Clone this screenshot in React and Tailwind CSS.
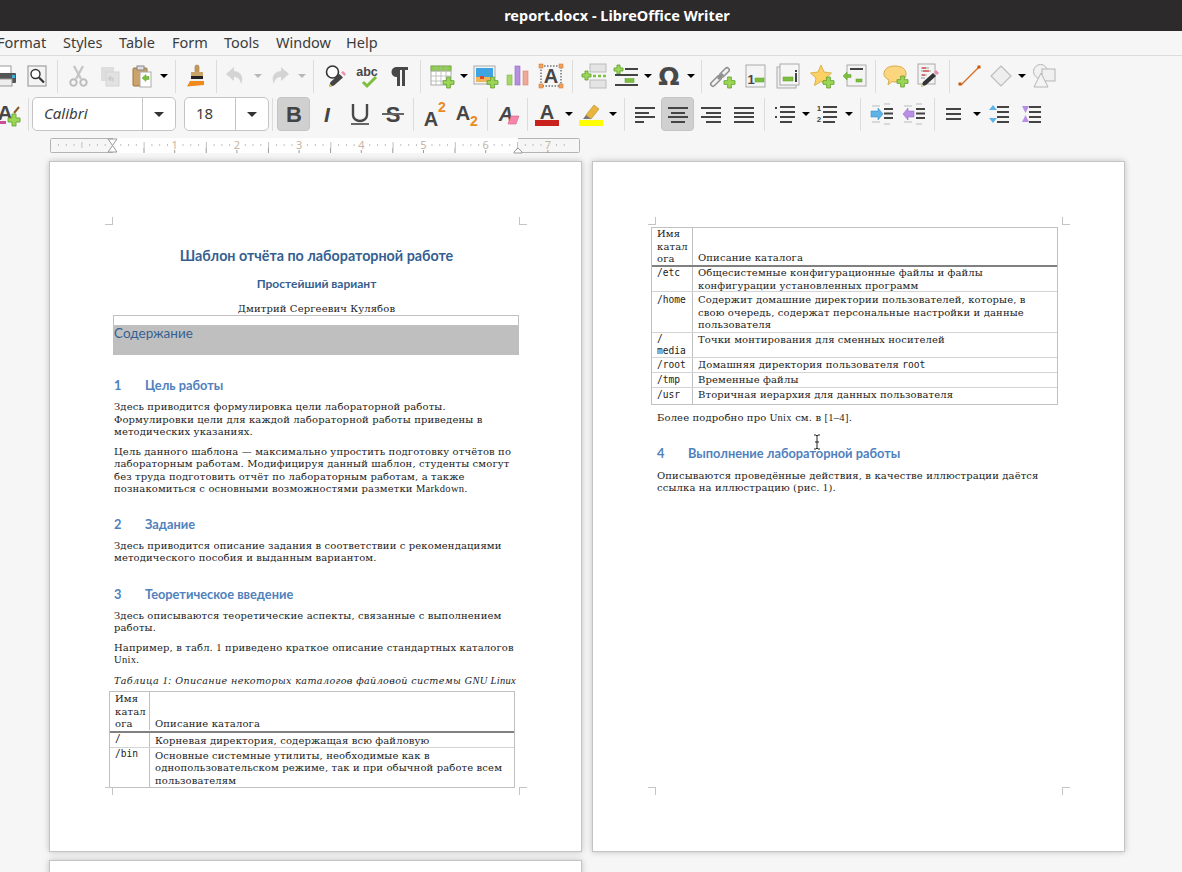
import React from 'react';

const G = '#7dbf3f';
const Plus = ({ x = 14, y = 14, s = 10 }) => {
  const a = s * 0.33;
  const b = s * 0.34;
  return (
    <path d={`M${x + a} ${y}h${b}v${a}h${a}v${b}h-${a}v${a}h-${b}v-${a}h-${a}v-${b}h${a}z`} fill="#9bd655" stroke="#5e9e2a" strokeWidth="0.8" />
  );
};
const Svg = ({ children, s = 24 }) => (
  <svg width={s} height={s} viewBox="0 0 24 24" className="block overflow-visible">{children}</svg>
);
const Letter = ({ t = 'A', x = 12, y = 19, size = 21, fill = '#464646', extra = {} }) => (
  <text x={x} y={y} fontSize={size} fontWeight="700" fontFamily="'Liberation Sans', sans-serif" textAnchor="middle" fill={fill} {...extra}>{t}</text>
);
const Lines = ({ rows, c = '#444', h = 2 }) => rows.map((r, i) => <rect key={i} x={r[0]} y={r[2]} width={r[1]} height={h} fill={c} />);

const Print = () => (
  <Svg>
    <rect x="6" y="2" width="12" height="8" fill="#fff" stroke="#999" />
    <rect x="1" y="9" width="22" height="10" rx="1" fill="#555" />
    <rect x="19" y="11" width="3" height="3" fill="#3bb3e0" />
    <rect x="5" y="15" width="14" height="7" fill="#eee" stroke="#999" />
  </Svg>
);
const Preview = () => (
  <Svg>
    <rect x="3" y="2" width="18" height="20" fill="#f4f4f4" stroke="#a0a0a0" strokeWidth="1.2" />
    <circle cx="10.5" cy="10" r="4.5" fill="#fff" stroke="#333" strokeWidth="1.4" />
    <path d="M14 13.5l5 5" stroke="#333" strokeWidth="2.2" />
  </Svg>
);
const Cut = () => (
  <Svg>
    <path d="M8 2l7 13M17 2l-7 13" stroke="#c6c6c6" strokeWidth="2.4" />
    <circle cx="7.5" cy="18.5" r="3.2" fill="none" stroke="#bdbdbd" strokeWidth="2" />
    <circle cx="17.5" cy="18.5" r="3.2" fill="none" stroke="#bdbdbd" strokeWidth="2" />
  </Svg>
);
const Copy = () => (
  <Svg>
    <rect x="3" y="3" width="13" height="14" fill="#dedede" />
    <rect x="8" y="8" width="13" height="14" fill="#e2e2e2" stroke="#d4d4d4" />
    <path d="M13 12l-2.500 2.500 2.500 2.500M11 14.500h4v3" fill="none" stroke="#c9c9c9" strokeWidth="1.3" />
  </Svg>
);
const Paste = () => (
  <Svg>
    <rect x="3" y="4" width="14" height="18" rx="1" fill="#cda36b" stroke="#9a7840" />
    <rect x="7" y="2" width="7" height="4" fill="#ddd" stroke="#888" />
    <rect x="10" y="8" width="11" height="15" fill="#fff" stroke="#aaa" />
    <path d="M12 14l4-3.500v2h3v3h-3v2z" fill={G} stroke="#5e9e2a" strokeWidth="0.5" />
  </Svg>
);
const Brush = () => (
  <Svg>
    <rect x="10" y="1" width="4" height="8" rx="2" fill="#c49a5a" stroke="#9a7840" strokeWidth="0.6" />
    <rect x="6" y="8" width="12" height="4" fill="#c9a468" />
    <rect x="6" y="12" width="12" height="4" fill="#222" />
    <rect x="6" y="15" width="12" height="2" fill="#eee" />
    <path d="M5 17h14v4l-17 1.500z" fill="#f08a1d" />
  </Svg>
);
const Undo = ({ flip }) => (
  <Svg>
    <path d={flip ? 'M14 3l8 7-8 7v-4c-4 0-6 2-7 7-3-6-1-12 7-13z' : 'M10 3l-8 7 8 7v-4c4 0 6 2 7 7 3-6 1-12-7-13z'} fill="#d4d4d4" />
  </Svg>
);
const Find = () => (
  <Svg>
    <circle cx="9.500" cy="8" r="6" fill="#fff" stroke="#333" strokeWidth="1.600" />
    <path d="M14 12l2 2" stroke="#333" strokeWidth="2" />
    <path d="M6 23l1.500-5 9-8 3.500 3.500-9 8z" fill="#444" />
    <path d="M18 8.500l2-1.500 3 3-1.500 2z" fill="#f08cb4" />
    <path d="M6 23l1-3 2 2z" fill="#f5d76e" />
  </Svg>
);
const Abc = () => (
  <Svg>
    <Letter t="abc" x={12} y={12} size={12.5} />
    <path d="M8 18l4 4 9-9" fill="none" stroke={G} strokeWidth="3" />
  </Svg>
);
const Pilcrow = () => (
  <Svg>
    <path d="M9 3h12v3h-3v16h-3V6h-2v16h-3v-9a5 5 0 0 1 -1-10z" fill="#484848" />
  </Svg>
);
const TableIcon = () => (
  <Svg>
    <rect x="1" y="2" width="20" height="19" fill="#fff" stroke="#aaa" />
    <rect x="1" y="2" width="20" height="5" fill="#8fcb4f" stroke="#6aa52e" strokeWidth="0.600" />
    <path d="M6 2v19M11 2v19M16 2v19M1 7h20M1 12h20M1 17h20" stroke="#b5b5b5" strokeWidth="0.800" />
    <Plus x={13} y={13} s={11} />
  </Svg>
);
const ImageIcon = () => (
  <Svg>
    <rect x="0" y="2" width="21" height="18" fill="#f4f4f4" stroke="#a8a8a8" />
    <rect x="2" y="4" width="17" height="14" fill="#3ea5e2" />
    <path d="M2 13h17v5H2z" fill="#f2b55c" />
    <rect x="6" y="12" width="4" height="3" fill="#d94a2a" />
    <Plus x={13} y={13} s={11} />
  </Svg>
);
const Chart = () => (
  <Svg>
    <rect x="1" y="11" width="5" height="10" fill="#a5d86a" stroke="#7fb348" strokeWidth="0.600" />
    <rect x="9" y="2" width="5" height="19" fill="#b68fe0" stroke="#9068c0" strokeWidth="0.600" />
    <rect x="17" y="7" width="5" height="14" fill="#f0a996" stroke="#d08670" strokeWidth="0.600" />
  </Svg>
);
const TextBox = () => (
  <Svg>
    <rect x="2" y="2" width="20" height="20" fill="none" stroke="#333" strokeDasharray="1.500 1.500" />
    <Letter x={12} y={19} size={20} />
    <g fill="#f2a15f" stroke="#c9722a" strokeWidth="0.500">
      <rect x="0" y="0" width="4" height="4" /><rect x="20" y="0" width="4" height="4" />
      <rect x="0" y="20" width="4" height="4" /><rect x="20" y="20" width="4" height="4" />
    </g>
  </Svg>
);
const PageBreak = () => (
  <Svg>
    <rect x="8" y="0" width="16" height="8" fill="#e4e4e4" stroke="#bbb" />
    <rect x="8" y="16" width="16" height="8" fill="#e4e4e4" stroke="#bbb" />
    <Plus x={0} y={7} s={9} />
    <path d="M11 12h3M16 12h3M21 12h3" stroke={G} strokeWidth="2.400" />
  </Svg>
);
const Field = () => (
  <Svg>
    <Plus x={0} y={1} s={9} />
    <path d="M11 5h13M1 11h23M1 21h23" stroke="#444" strokeWidth="2" />
    <rect x="11" y="14.500" width="9" height="4" fill={G} stroke="#5e9e2a" strokeWidth="0.500" />
  </Svg>
);
const Omega = () => (
  <Svg>
    <text x="12" y="21" fontSize="25" fontWeight="700" fontFamily="'DejaVu Sans', sans-serif" textAnchor="middle" fill="#484848">Ω</text>
  </Svg>
);
const LinkIcon = () => (
  <Svg>
    <path d="M2 20l6-6M11 11l5-5" stroke="#8f8f8f" strokeWidth="6" strokeLinecap="round" />
    <path d="M2 20l6-6M11 11l5-5" stroke="#f2f2f2" strokeWidth="3" strokeLinecap="round" />
    <path d="M7 15l5-5" stroke="#8f8f8f" strokeWidth="3" />
    <Plus x={13} y={13} s={11} />
  </Svg>
);
const Footnote = () => (
  <Svg>
    <rect x="2" y="1" width="19" height="22" fill="#f4f4f4" stroke="#aaa" />
    <Letter t="1" x={7} y={20} size={13} />
    <rect x="11" y="14" width="9" height="4" fill={G} stroke="#5e9e2a" strokeWidth="0.500" />
  </Svg>
);
const Endnote = () => (
  <Svg>
    <rect x="1" y="3" width="19" height="21" fill="#eee" stroke="#aaa" />
    <rect x="4" y="0" width="19" height="21" fill="#f6f6f6" stroke="#aaa" />
    <rect x="19" y="6" width="2" height="2" fill="#444" />
    <rect x="19" y="9" width="2" height="9" fill="#444" />
    <rect x="7" y="13" width="10" height="4" fill={G} stroke="#5e9e2a" strokeWidth="0.500" />
  </Svg>
);
const Star = () => (
  <Svg>
    <path d="M11 1l3 7 7.500 1-5.500 5 1.500 7.500-6.500-4-6.500 4 1.500-7.500-5.500-5 7.500-1z" fill="#fbd064" stroke="#d6a53a" strokeWidth="0.800" />
    <Plus x={13} y={13} s={11} />
  </Svg>
);
const CrossRef = () => (
  <Svg>
    <rect x="4" y="1" width="19" height="21" fill="#f4f4f4" stroke="#aaa" />
    <rect x="7" y="4" width="13" height="2" fill="#444" />
    <path d="M0 12l4-4v2.500h4v3H4V16z" fill={G} stroke="#5e9e2a" strokeWidth="0.500" />
    <rect x="13" y="15" width="6" height="3" fill={G} stroke="#5e9e2a" strokeWidth="0.500" />
  </Svg>
);
const Comment = () => (
  <Svg>
    <path d="M11 2c7 0 11 3 11 8s-4 8-11 8c-1 0-2 0-3-.5L4 21l1-5C2 14.500 0 12.500 0 10c0-5 4-8 11-8z" fill="#fcd67e" stroke="#d9ab4a" />
    <Plus x={13} y={12} s={11} />
  </Svg>
);
const TrackChanges = () => (
  <Svg>
    <rect x="1" y="0" width="17" height="20" fill="#f4f4f4" stroke="#aaa" />
    <path d="M4 4h8M4 7h10M4 11h6M4 14h4" stroke="#999" strokeWidth="1" />
    <path d="M5 4h4M6 7h6M5 11h3" stroke="#d22" strokeWidth="1" />
    <path d="M4 23l2-5 10-9 3 3-10 9z" fill="#333" />
    <path d="M17 8l2-2 3 3-2 2z" fill="#ea8ab2" />
    <path d="M4 23l1-3 2 2z" fill="#f5ea9a" />
  </Svg>
);
const LineIcon = () => (
  <Svg>
    <path d="M3 21L21 3" stroke="#d76b1f" strokeWidth="1.200" />
    <rect x="0.500" y="18.500" width="3" height="3" fill="#c8560d" />
    <rect x="19.500" y="1.500" width="3" height="3" fill="#c8560d" />
  </Svg>
);
const Diamond = () => (
  <Svg>
    <path d="M12 2l10 10-10 10L2 12z" fill="#eee" stroke="#bdbdbd" strokeWidth="1.200" />
  </Svg>
);
const Shapes = () => (
  <Svg>
    <circle cx="7.500" cy="7.500" r="7" fill="#f2f2f2" stroke="#b5b5b5" />
    <rect x="9" y="5" width="13" height="12" fill="#f0f0f0" stroke="#b5b5b5" />
    <path d="M8 9l7 14H1z" fill="#f4f4f4" stroke="#b5b5b5" />
  </Svg>
);
const StyleNew = () => (
  <Svg>
    <Letter x={8} y={18} size={21} />
    <path d="M17 11l5-6" stroke="#8a5a2a" strokeWidth="2" />
    <rect x="3" y="19" width="6" height="3" fill="#c94f9a" />
    <Plus x={11} y={12} s={12} />
  </Svg>
);
const Bold = () => <Svg><Letter t="B" size={22} y={20} fill="#444" /></Svg>;
const Italic = () => <Svg><Letter t="I" size={21} y={20} fill="#444" extra={{ fontStyle: 'italic' }} /></Svg>;
const Underline = () => (
  <Svg>
    <path d="M5 2v11a7 6 0 0 0 14 0V2" fill="none" stroke="#484848" strokeWidth="2.400" />
    <rect x="3" y="21" width="18" height="2" fill="#666" />
  </Svg>
);
const Strike = () => (
  <Svg>
    <Letter t="S" size={22} y={20} fill="#444" />
    <rect x="1" y="11" width="22" height="2" fill="#666" />
  </Svg>
);
const Super = () => (
  <Svg>
    <Letter x={8} y={24} size={20} />
    <Letter t="2" x={19} y={10} size={14} fill="#ea8a20" />
  </Svg>
);
const Sub = () => (
  <Svg>
    <Letter x={8} y={18} size={20} />
    <Letter t="2" x={19} y={24} size={14} fill="#ea8a20" />
  </Svg>
);
const ClearFmt = () => (
  <Svg>
    <Letter x={10} y={19} size={20} extra={{ fontStyle: 'italic' }} />
    <path d="M12 22l3-8h8l-3 8z" fill="#f685ad" stroke="#d9608c" strokeWidth="0.600" />
  </Svg>
);
const FontColor = () => (
  <Svg>
    <Letter x={12} y={17} size={20} />
    <rect x="0" y="18" width="24" height="6" fill="#c9211e" />
  </Svg>
);
const Highlight = () => (
  <Svg>
    <path d="M7 13l8-10 5 4-8 10z" fill="#e9b53f" stroke="#b78a20" strokeWidth="0.600" />
    <path d="M4 17l3-4 5 4z" fill="#777" />
    <rect x="0" y="18" width="24" height="6" fill="#ffff00" />
  </Svg>
);
const Align = ({ mode }) => {
  const x = { left: [2, 2, 2, 2], center: [2, 5, 2, 5], right: [2, 7, 2, 7], just: [2, 2, 2, 2] }[mode];
  const w = mode === 'just' ? [20, 20, 20, 20] : mode === 'center' ? [20, 14, 20, 14] : mode === 'left' ? [20, 14, 20, 9] : [20, 15, 20, 15];
  return (
    <Svg>
      {[5, 10, 14, 19].map((y, i) => (
        <rect key={y} x={x[i]} y={y} width={w[i]} height="2" fill="#444" />
      ))}
    </Svg>
  );
};
const Bullets = () => (
  <Svg>
    <Lines rows={[[7, 15, 4], [7, 15, 9], [7, 15, 14], [7, 12, 19]]} />
    <rect x="2" y="5" width="2" height="2" fill="#444" />
    <rect x="2" y="14" width="2" height="2" fill="#444" />
  </Svg>
);
const Numbers = () => (
  <Svg>
    <Lines rows={[[8, 14, 4], [8, 14, 9], [8, 14, 14], [8, 12, 19]]} />
    <Letter t="1" x={4} y={9} size={8} />
    <Letter t="2" x={4} y={20} size={8} />
  </Svg>
);
const Indent = ({ inc }) => (
  <Svg>
    <path d="M2 4h8M2 20h8M14 2h6M14 22h6" stroke="#bbb" strokeWidth="1" />
    <path d="M14 7h9M14 16h9" stroke="#444" strokeWidth="2" />
    <path d="M14 11.500h9" stroke="#444" strokeWidth="2" />
    {inc ? (
      <path d="M1 9h7V6l5 6-5 6v-3H1z" fill="#5db2e8" stroke="#2e85c0" strokeWidth="0.500" />
    ) : (
      <path d="M12 9H6V6l-5 6 5 6v-3h6z" fill="#b98fe6" stroke="#8a62c0" strokeWidth="0.500" />
    )}
  </Svg>
);
const Spacing = () => (
  <Svg>
    <Lines rows={[[3, 15, 6], [3, 15, 11], [3, 15, 16]]} />
  </Svg>
);
const ParaInc = () => (
  <Svg>
    <Lines rows={[[9, 12, 4], [9, 12, 9], [9, 12, 14], [9, 12, 19]]} />
    <path d="M5 3l4 5H1zM5 21l4-5H1z" fill="#5db2e8" />
  </Svg>
);
const ParaDec = () => (
  <Svg>
    <Lines rows={[[9, 12, 4], [9, 12, 9], [9, 12, 14], [9, 12, 19]]} />
    <path d="M2 4h7L5.500 11zM2 20h7L5.500 13z" fill="#b98fe6" />
  </Svg>
);

const Tool = ({ children, active, className = 'w-[32px]' }) => (
  <div className={`${className} h-[34px] shrink-0 flex items-center justify-center rounded ${active ? 'bg-[#d0d0d0] border border-[#c4c4c4]' : ''}`}>
    {children}
  </div>
);
const Arrow = ({ className = 'w-[12px]', disabled }) => (
  <div className={`${className} shrink-0 flex items-center justify-center`}>
    <div className={`w-0 h-0 border-x-[4px] border-x-transparent border-t-[4px] ${disabled ? 'border-t-[#b8b8b8]' : 'border-t-black'}`} />
  </div>
);
const Sep = ({ className = 'mx-[4px]' }) => <div className={`${className} w-px h-[33px] shrink-0 bg-[#dcdcdc]`} />;

const Combo = ({ className, text, italic, arrowBox }) => (
  <div className={`${className} h-[34px] shrink-0 flex bg-white border border-[#c4c4c4] rounded-[5px]`}>
    <div className={`flex-1 flex items-center pl-[11px] pb-[2px] text-[15px] text-[#3c3c3c] font-['Noto_Sans',sans-serif] ${italic ? 'italic' : ''}`}>{text}</div>
    <div className={`${arrowBox} border-l border-[#c4c4c4] flex items-center justify-center`}>
      <div className="w-0 h-0 border-x-[5px] border-x-transparent border-t-[5px] border-t-[#333]" />
    </div>
  </div>
);

const menus = [
  ['Format', 'w-[66px]'], ['Styles', 'w-[56px]'], ['Table', 'w-[53px]'], ['Form', 'w-[52px]'],
  ['Tools', 'w-[52px]'], ['Window', 'w-[70px]'], ['Help', 'w-[40px]'],
];

const Ruler = () => {
  const ticks = [];
  for (let i = -8; i <= 58; i++) {
    const x = 62.5 + i * 7.78;
    if (x < 2 || x > 528) continue;
    const k = ((i % 8) + 8) % 8;
    if (k === 0) continue;
    ticks.push(<rect key={i} x={x} y={k === 4 ? 4 : 6} width="1" height={k === 4 ? 6 : 2} fill="#c0c0c0" />);
  }
  const nums = [1, 2, 3, 4, 5, 6, 7];
  return (
    <svg width="531" height="16" viewBox="0 0 531 16" className="block ml-[50px] shrink-0 overflow-visible">
      <rect x="0.500" y="0.500" width="529" height="14" fill="#f6f6f6" stroke="#b4b4b4" rx="1" />
      <rect x="63" y="0" width="405" height="15" fill="#fff" />
      {ticks}
      {nums.map((n) => (
        <g key={n}>
          <text x={62.5 + n * 62.2} y="11" fontSize="11" textAnchor="middle" fill="#c4b4a4" fontFamily="'Noto Sans', sans-serif">{n}</text>
          <rect x={62 + n * 62.2} y="12" width="1" height="3" fill="#999" />
        </g>
      ))}
      {[0, 1, 2, 3, 4, 5, 6].map((n) => (
        <rect key={n} x={93.500 + n * 62.2} y="10" width="1" height="5" fill="#999" />
      ))}
      <path d="M58 1h9l-4.500 6.500L67 14h-9l4.500-6.500z" fill="#fff" stroke="#999" />
      <path d="M468 10l-4 4v1h8v-1z" fill="#fff" stroke="#999" />
    </svg>
  );
};

const Crop = ({ className }) => <div className={`absolute w-[8px] h-[8px] border-[#c4c4c4] ${className}`} />;

const serif = "font-['DejaVu_Serif','Liberation_Serif',serif]";
const Para = ({ lines, className = '', size = 'text-[10px] tracking-[0.13px]' }) => (
  <div className={`${serif} ${size} leading-[12.5px] text-[#222] whitespace-nowrap ${className}`}>
    {lines.map((l, i) => <div key={i}>{l}</div>)}
  </div>
);
const Heading = ({ n, children, className = '' }) => (
  <div className={`flex text-[12.8px] leading-[16px] font-bold text-[#4f81bd] font-['Lato',sans-serif] ${className}`}>
    <span className="w-[31px]">{n}</span>{children}
  </div>
);
const Mono = ({ children }) => <span className="font-['DejaVu_Sans_Mono',monospace] text-[9.6px] tracking-normal">{children}</span>;
// latin words and digits come out narrower than the cyrillic in the reference
const Lat = ({ children }) => <span className="font-['Liberation_Serif',serif] text-[10.5px] tracking-[0.3px]">{children}</span>;

const DirTable = ({ rows, first, className = '', headFirst = 'h-[37px]', headSecond = 'pt-[24px]' }) => (
  <div className={`border border-[#c0c0c0] ${className}`}>
    <div className="flex border-b-2 border-[#808080]">
      <Para className={`${first} ${headFirst} border-r border-[#c0c0c0] pl-[5px]`} lines={['Имя', 'катал', 'ога']} />
      <Para className={`pl-[5px] ${headSecond}`} lines={['Описание каталога']} />
    </div>
    {rows.map((r, i) => (
      <div key={r.dir} className={`flex ${r.h} ${i < rows.length - 1 ? 'border-b border-[#d4d4d4]' : ''}`}>
        <div className={`${first} ${r.mpt} border-r border-[#c0c0c0] pl-[5px] font-['DejaVu_Sans_Mono',monospace] text-[9.6px] leading-[11.5px] text-[#222] whitespace-pre-line`}>{r.dir}</div>
        <Para className={`pl-[5px] ${r.pt}`} lines={r.lines} />
      </div>
    ))}
  </div>
);

const CropMarks = () => (
  <>
    <Crop className="left-[55px] top-[55px] border-r border-b" />
    <Crop className="left-[469px] top-[55px] border-l border-b" />
    <Crop className="left-[55px] top-[625px] border-r border-t" />
    <Crop className="left-[469px] top-[625px] border-l border-t" />
  </>
);

const pageCls = 'relative w-[533px] h-[691px] shrink-0 bg-white border border-[#c4c4c4] shadow-[0_0_6px_rgba(0,0,0,0.22)]';

export default function App() {
  return (
    <div className="relative w-[1182px] h-[872px] overflow-hidden bg-[#f6f6f6] flex flex-col">
      <div className="h-[31px] shrink-0 bg-[#2c2a2a] pl-[52px] flex items-center justify-center text-white text-[14.5px] font-bold font-['Noto_Sans',sans-serif]">
        report.docx - LibreOffice Writer
      </div>

      <div className="h-[25px] shrink-0 border-b border-[#dcdcdc] flex items-center -ml-[3px] text-[14.5px] text-[#3c3c3c] font-['Noto_Sans',sans-serif]">
        {menus.map(([m, w]) => <div key={m} className={w}>{m}</div>)}
      </div>

      <div className="h-[39px] shrink-0 flex items-center -ml-[11px] pt-px">
        <Tool><Print /></Tool>
        <Tool><Preview /></Tool>
        <Sep />
        <Tool><Cut /></Tool>
        <Tool><Copy /></Tool>
        <Tool><Paste /></Tool>
        <Arrow />
        <Sep className="mx-[5px]" />
        <Tool><Brush /></Tool>
        <Sep className="mx-[3px]" />
        <Tool><Undo /></Tool>
        <Arrow className="w-[11px]" disabled />
        <Tool><Undo flip /></Tool>
        <Arrow className="w-[13px]" disabled />
        <Sep className="mx-[5px]" />
        <Tool><Find /></Tool>
        <Tool><Abc /></Tool>
        <Tool><Pilcrow /></Tool>
        <Sep className="mx-[5px]" />
        <Tool><TableIcon /></Tool>
        <Arrow />
        <Tool><ImageIcon /></Tool>
        <Tool><Chart /></Tool>
        <Tool className="w-[33px]"><TextBox /></Tool>
        <Sep className="mx-[5px]" />
        <Tool><PageBreak /></Tool>
        <Tool><Field /></Tool>
        <Arrow className="w-[11px]" />
        <Tool><Omega /></Tool>
        <Arrow className="w-[11px]" />
        <Sep className="mx-[5px]" />
        <Tool><LinkIcon /></Tool>
        <Tool className="w-[33px]"><Footnote /></Tool>
        <Tool><Endnote /></Tool>
        <Tool className="w-[35px]"><Star /></Tool>
        <Tool><CrossRef /></Tool>
        <Sep className="mx-[4px]" />
        <Tool><Comment /></Tool>
        <Tool className="w-[33px]"><TrackChanges /></Tool>
        <Sep className="mx-[4px]" />
        <Tool><LineIcon /></Tool>
        <Tool className="w-[30px]"><Diamond /></Tool>
        <Arrow />
        <Tool className="w-[34px]"><Shapes /></Tool>
      </div>

      <div className="h-[38px] shrink-0 flex items-center -ml-[7px]">
        <Tool><StyleNew /></Tool>
        <Sep className="mx-[3px]" />
        <Combo className="w-[144px]" text="Calibri" italic arrowBox="w-[33px]" />
        <div className="w-[8px] shrink-0" />
        <Combo className="w-[85px]" text="18" arrowBox="w-[33px]" />
        <Sep className="ml-[3px] mr-[4px]" />
        <Tool active className="w-[33px]"><Bold /></Tool>
        <Tool className="w-[33px]"><Italic /></Tool>
        <Tool className="w-[33px]"><Underline /></Tool>
        <Tool className="w-[33px]"><Strike /></Tool>
        <Sep className="mx-[4px]" />
        <Tool className="w-[33px]"><Super /></Tool>
        <Tool><Sub /></Tool>
        <Sep className="mx-[4px]" />
        <Tool><ClearFmt /></Tool>
        <Sep className="mx-[3px]" />
        <Tool><FontColor /></Tool>
        <Arrow />
        <Tool><Highlight /></Tool>
        <Arrow />
        <Sep className="ml-[5px] mr-[4px]" />
        <Tool><Align mode="left" /></Tool>
        <Tool active className="w-[33px]"><Align mode="center" /></Tool>
        <Tool className="w-[33px]"><Align mode="right" /></Tool>
        <Tool className="w-[33px]"><Align mode="just" /></Tool>
        <Sep className="mx-[4px]" />
        <Tool><Bullets /></Tool>
        <Arrow className="w-[10px]" />
        <Tool><Numbers /></Tool>
        <Arrow />
        <Sep className="mx-[5px]" />
        <Tool><Indent inc /></Tool>
        <Tool><Indent /></Tool>
        <Sep className="mx-[4px]" />
        <Tool><Spacing /></Tool>
        <Arrow />
        <Tool className="w-[33px]"><ParaInc /></Tool>
        <Tool><ParaDec /></Tool>
      </div>

      <div className="h-[28px] shrink-0 pt-[5px]">
        <Ruler />
      </div>

      <div className="flex gap-[10px] pl-[49px]">
        <div className="flex flex-col gap-[8px]">
          <div className={pageCls}>
            <CropMarks />
            <div className="pl-[64px] pr-[62px] pt-[85px]">
              <div className="text-center text-[14.3px] leading-[18px] font-bold text-[#365f91] font-['Lato',sans-serif]">Шаблон отчёта по лабораторной работе</div>
              <div className="text-center mt-[11px] text-[12px] leading-[15px] font-bold text-[#365f91] font-['Lato',sans-serif]">Простейший вариант</div>
              <div className={`text-center mt-[12px] ${serif} text-[10px] tracking-[0.13px] leading-[12px] text-[#222]`}>Дмитрий Сергеевич Кулябов</div>
              <div className="-ml-[1px] w-[406px] h-[11px] border border-[#c0c0c0]" />
              <div className="-ml-[1px] w-[406px] h-[29px] bg-[#bfbfbf] pl-px text-[13.5px] leading-[14px] text-[#365f91] font-['Lato',sans-serif]">Содержание</div>
              <Heading n="1" className="mt-[22px]">Цель работы</Heading>
              <Para className="mt-[8px]" lines={['Здесь приводится формулировка цели лабораторной работы.', 'Формулировки цели для каждой лабораторной работы приведены в', 'методических указаниях.']} />
              <Para className="mt-[7px]" lines={['Цель данного шаблона — максимально упростить подготовку отчётов по', 'лабораторным работам. Модифицируя данный шаблон, студенты смогут', 'без труда подготовить отчёт по лабораторным работам, а также', <>познакомиться с основными возможностями разметки <Lat>Markdown</Lat>.</>]} />
              <Heading n="2" className="mt-[20px]">Задание</Heading>
              <Para className="mt-[8px]" lines={['Здесь приводится описание задания в соответствии с рекомендациями', 'методического пособия и выданным вариантом.']} />
              <Heading n="3" className="mt-[21px]">Теоретическое введение</Heading>
              <Para className="mt-[8px]" lines={['Здесь описываются теоретические аспекты, связанные с выполнением', 'работы.']} />
              <Para className="mt-[7px]" lines={[<>Например, в табл. <Lat>1</Lat> приведено краткое описание стандартных каталогов</>, <Lat>Unix.</Lat>]} />
              <Para className="mt-[8px] italic" size="text-[9.6px] tracking-[0.35px]" lines={[<>Таблица <Lat>1:</Lat> Описание некоторых каталогов файловой системы <Lat>GNU Linux</Lat></>]} />
              <DirTable
                className="mt-[4px] -ml-[5px] w-[406px]"
                first="w-[40px] shrink-0"
                headFirst="h-[38px] pt-[1px]"
                headSecond="pt-[26px]"
                rows={[
                  { dir: '/', h: 'h-[15px]', pt: 'pt-[2px]', mpt: '', lines: ['Корневая директория, содержащая всю файловую'] },
                  { dir: '/bin', h: 'h-[39px]', pt: 'pt-[2px]', mpt: '', lines: ['Основные системные утилиты, необходимые как в', 'однопользовательском режиме, так и при обычной работе всем', 'пользователям'] },
                ]}
              />
            </div>
          </div>
          <div className="w-[533px] h-[20px] bg-white border border-[#c4c4c4] shadow-[0_0_6px_rgba(0,0,0,0.22)] shrink-0" />
        </div>

        <div className={pageCls}>
          <CropMarks />
          <div className="pl-[58px] pt-[65px]">
            <DirTable
              className="w-[407px]"
              first="w-[41px] shrink-0"
              rows={[
                { dir: '/etc', h: 'h-[25px]', pt: '', mpt: '', lines: ['Общесистемные конфигурационные файлы и файлы', 'конфигурации установленных программ'] },
                { dir: '/home', h: 'h-[41px]', pt: 'pt-[2px]', mpt: 'pt-[2px]', lines: ['Содержит домашние директории пользователей, которые, в', 'свою очередь, содержат персональные настройки и данные', 'пользователя'] },
                { dir: '/\nmedia', h: 'h-[25px]', pt: 'pt-[1px]', mpt: '', lines: ['Точки монтирования для сменных носителей'] },
                { dir: '/root', h: 'h-[15px]', pt: 'pt-[1px]', mpt: 'pt-[1px]', lines: [<>Домашняя директория пользователя <Mono>root</Mono></>] },
                { dir: '/tmp', h: 'h-[15px]', pt: 'pt-[1px]', mpt: 'pt-[1px]', lines: ['Временные файлы'] },
                { dir: '/usr', h: 'h-[16px]', pt: 'pt-[1px]', mpt: 'pt-[1px]', lines: ['Вторичная иерархия для данных пользователя'] },
              ]}
            />
            <div className="pl-[6px]">
              <Para className="mt-[7px]" lines={[<>Более подробно про <Lat>Unix</Lat> см. в <Lat>[1–4]</Lat>.</>]} />
              <Heading n="4" className="mt-[20px]">Выполнение лабораторной работы</Heading>
              <Para className="mt-[9px]" lines={['Описываются проведённые действия, в качестве иллюстрации даётся', <>ссылка на иллюстрацию (рис. <Lat>1</Lat>).</>]} />
            </div>
          </div>
        </div>
      </div>

      <svg width="8" height="16" viewBox="0 0 8 16" className="absolute left-[813px] top-[434px]">
        <path d="M1 1h2l1 1 1-1h2M4 2v12M1 15h2l1-1 1 1h2M2 8h4" fill="none" stroke="#222" strokeWidth="1" />
      </svg>
    </div>
  );
}
